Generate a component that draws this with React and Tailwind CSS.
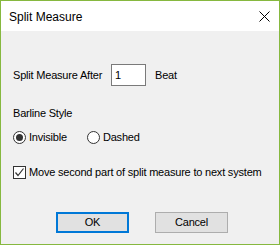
import { useState } from 'react'

function Radio({ checked, onClick, label }) {
  return (
    <button type="button" onClick={onClick} className="flex items-center h-[13px]">
      <span className="w-[13px] h-[13px] rounded-full border border-[#333333] bg-white flex items-center justify-center">
        {checked && <span className="w-[7px] h-[7px] rounded-full bg-[#333333]"></span>}
      </span>
      <span className="ml-[3px] leading-[13px]">{label}</span>
    </button>
  )
}

export default function App() {
  const [beat, setBeat] = useState('1')
  const [style, setStyle] = useState('invisible')
  const [moveNext, setMoveNext] = useState(true)

  return (
    <div className="w-[280px] h-[245px] border border-[#86b83f] bg-[#f0f0f0] flex flex-col text-black font-['Liberation_Sans',Arial,sans-serif] text-[11px] tracking-[-0.2px] overflow-hidden">
      <div className="h-[30px] bg-white flex items-center justify-between pl-[8px] pr-[9px] shrink-0">
        <span className="text-[12px] tracking-normal mt-[1px]">Split Measure</span>
        <svg width="11" height="11" viewBox="0 0 11 11" className="mt-[1px]">
          <path d="M0.5 0.5 L10.5 10.5 M10.5 0.5 L0.5 10.5" stroke="#000" strokeWidth="1" />
        </svg>
      </div>

      <div className="flex flex-col pl-[11px]">
        <div className="flex items-center mt-[33px] h-[22px]">
          <span className="w-[99px] pl-[1px]">Split Measure After</span>
          <input
            value={beat}
            onChange={(e) => setBeat(e.target.value)}
            className="w-[35px] h-[22px] border border-[#7a7a7a] bg-white pl-[3px] text-[11px] outline-none"
          />
          <span className="ml-[9px]">Beat</span>
        </div>

        <div className="mt-[21px] h-[13px] leading-[13px] pl-[1px]">Barline Style</div>

        <div className="flex mt-[11px] pl-[1px]">
          <Radio checked={style === 'invisible'} onClick={() => setStyle('invisible')} label="Invisible" />
          <div className="ml-[20px]">
            <Radio checked={style === 'dashed'} onClick={() => setStyle('dashed')} label="Dashed" />
          </div>
        </div>

        <button type="button" onClick={() => setMoveNext(!moveNext)} className="flex items-center mt-[22px] h-[13px] pl-[1px]">
          <span className="w-[13px] h-[13px] border border-[#333333] bg-white flex items-center justify-center">
            {moveNext && (
              <svg width="11" height="11" viewBox="0 0 11 11">
                <path d="M1.5 5.5 L4 8.5 L9.5 1.5" stroke="#333" strokeWidth="1.2" fill="none" />
              </svg>
            )}
          </span>
          <span className="ml-[3px] leading-[13px]">Move second part of split measure to next system</span>
        </button>

        <div className="flex mt-[33px] pl-[44px] gap-[26px]">
          <button type="button" className="w-[73px] h-[21px] border-2 border-[#0078d7] bg-[#e1e1e1] flex items-center justify-center">OK</button>
          <button type="button" className="w-[73px] h-[21px] border border-[#adadad] bg-[#e1e1e1] flex items-center justify-center">Cancel</button>
        </div>
      </div>
    </div>
  )
}
